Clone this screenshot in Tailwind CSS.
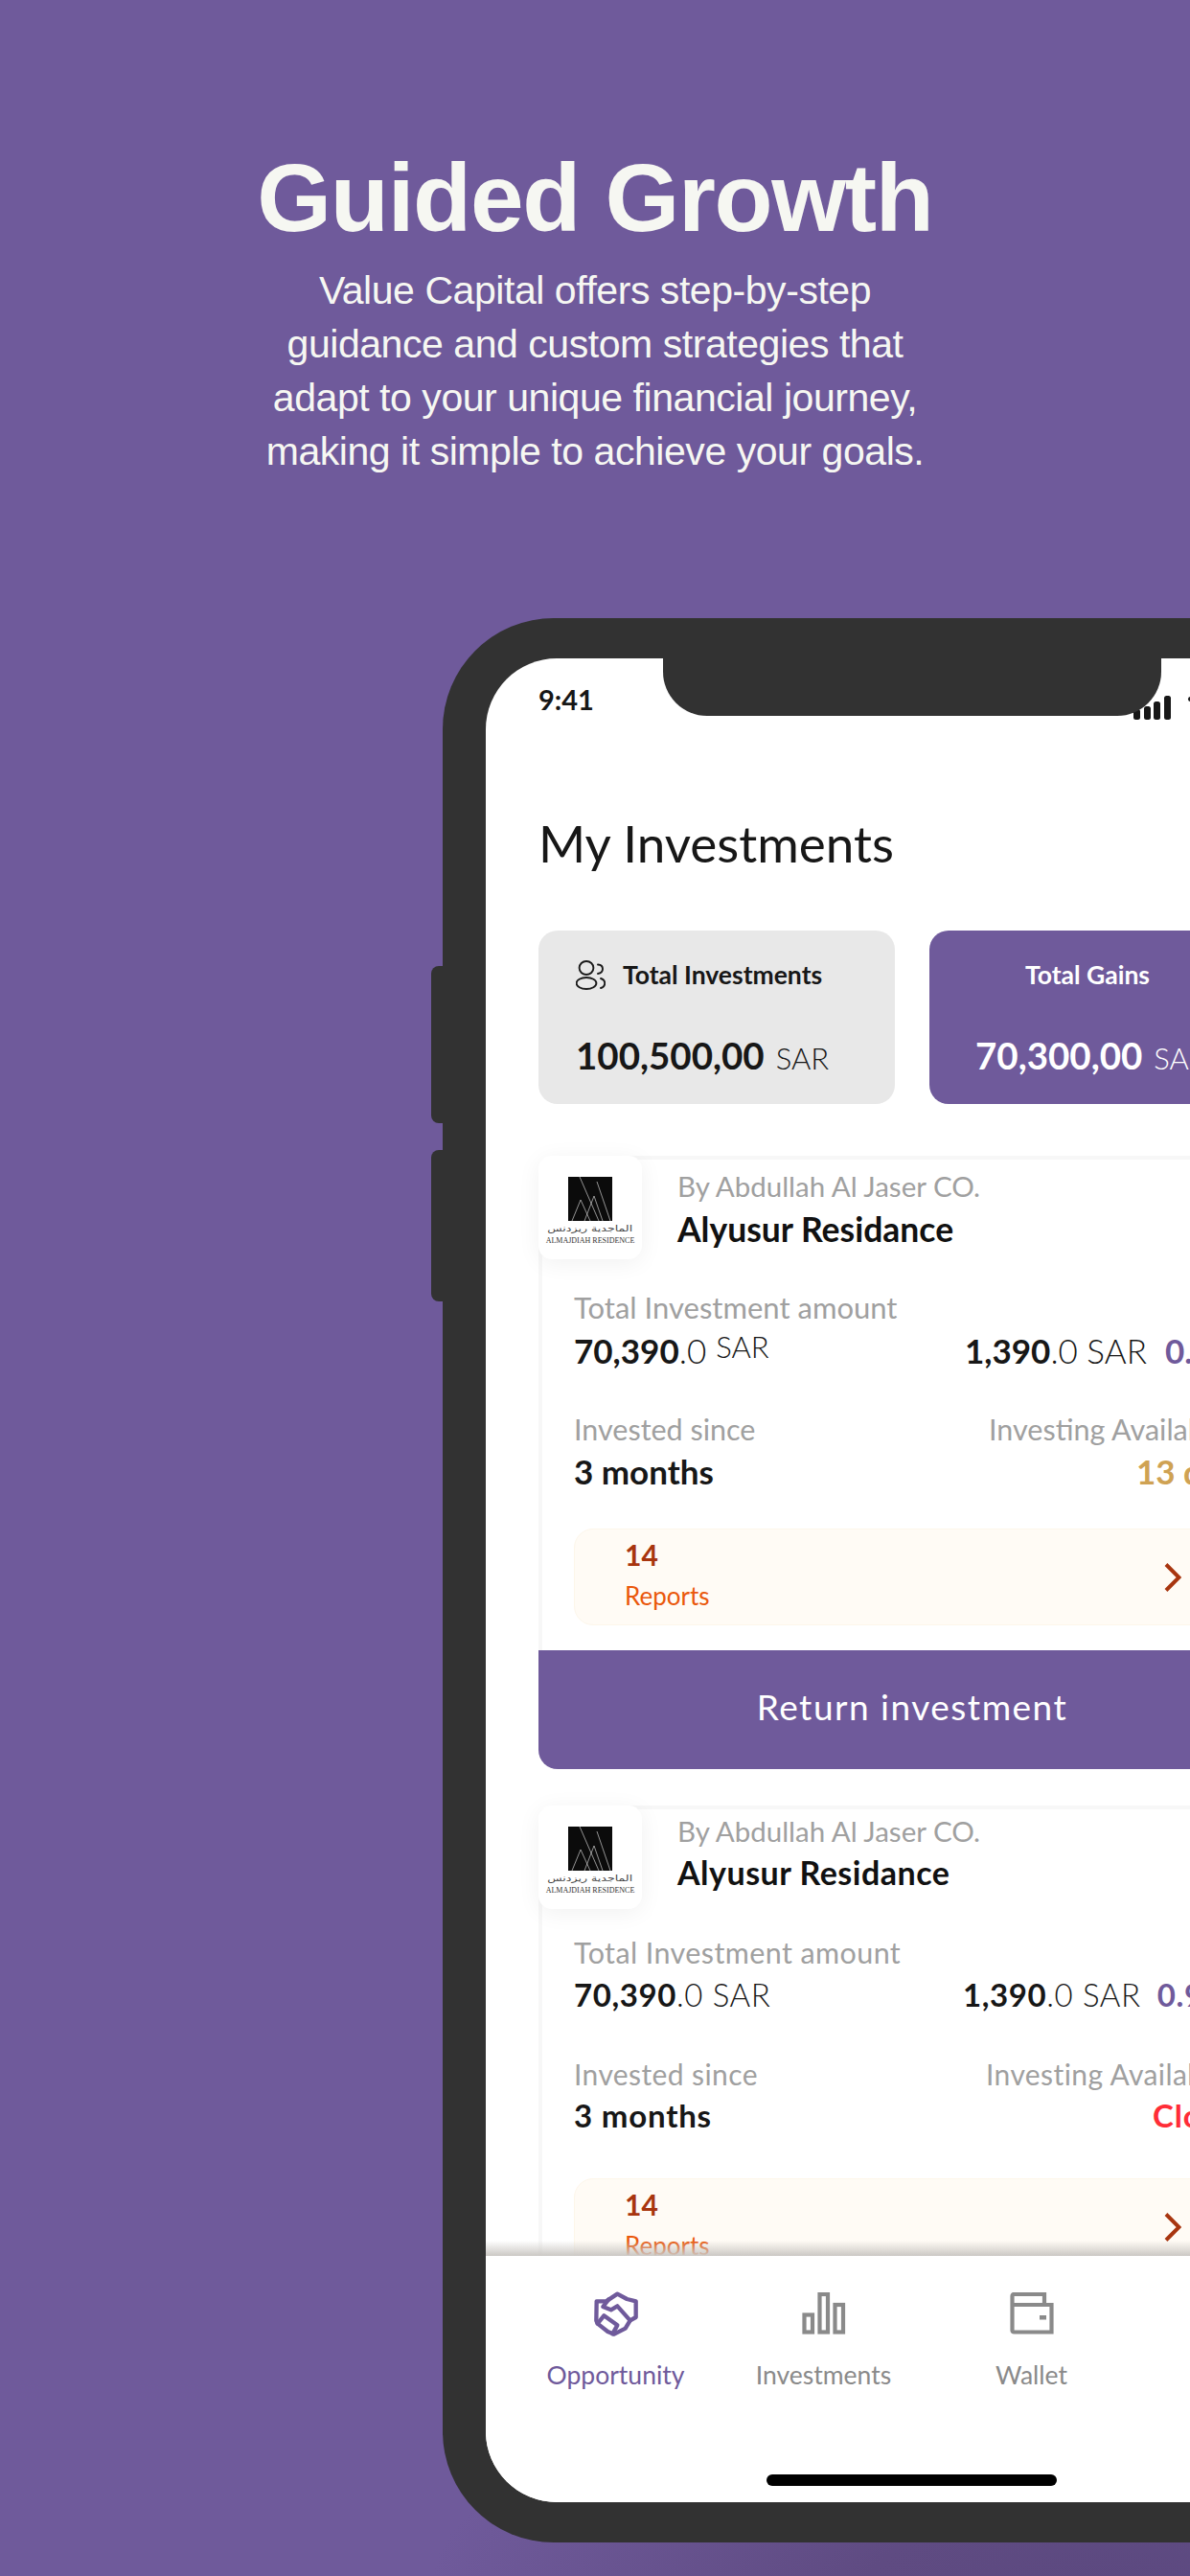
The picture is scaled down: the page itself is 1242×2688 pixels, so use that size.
<!DOCTYPE html>
<html lang="en">
<head>
    <meta charset="UTF-8">
    <meta name="viewport" content="width=device-width, initial-scale=1.0">
    <title>Guided Growth</title>
    <script src="https://cdn.jsdelivr.net/npm/@tailwindcss/browser@4"></script>
</head>
<body class="bg-[#6f5a9b]">
<div class="w-[1242px] h-[2688px] overflow-hidden bg-[radial-gradient(ellipse_700px_240px_at_1150px_2700px,#5c4980_0%,#5f4b82_35%,#6f5a9b_100%)] font-['Lato',sans-serif]">

    <!-- headline -->
    <div class="pt-[156px] text-center text-[#f6f7f2] font-['Liberation_Sans',sans-serif]">
        <h1 class="text-[100px] leading-[100px] font-bold tracking-[-1.3px]">Guided Growth</h1>
        <p class="mt-[19px] text-[41px] leading-[56px] tracking-[-0.45px]">Value Capital offers step-by-step<br>guidance and custom strategies that<br>adapt to your unique financial journey,<br>making it simple to achieve your goals.</p>
    </div>

    <!-- phone -->
    <div class="relative mt-[146px] ml-[462px] w-[1000px] h-[2008px] rounded-[116px] bg-[#323232] pt-[42px] pl-[45px] pr-[45px]">
        <div class="absolute -left-[12px] top-[363px] w-[14px] h-[164px] rounded-l-[8px] bg-[#323232]"></div>
        <div class="absolute -left-[12px] top-[555px] w-[14px] h-[158px] rounded-l-[8px] bg-[#323232]"></div>

        <div class="relative h-[1924px] rounded-[74px] bg-white overflow-hidden flex flex-col">
            <div class="absolute z-20 left-[185px] top-0 w-[520px] h-[60px] rounded-b-[46px] bg-[#323232]"></div>

            <div class="h-[1667px] shrink-0 overflow-hidden">
                <!-- status bar -->
                <div class="flex h-[163px] pl-[55px]">
                    <div class="w-[621px] mt-[28px] h-[30px] text-[29px] leading-[30px] font-bold text-[#171717]">9:41</div>
                    <div class="flex items-end gap-[3.7px] h-[25px] mt-[39px]">
                        <span class="block w-[7px] h-[11px] rounded-[2.5px] bg-[#171717]"></span>
                        <span class="block w-[7px] h-[14px] rounded-[2.5px] bg-[#171717]"></span>
                        <span class="block w-[7px] h-[19px] rounded-[2.5px] bg-[#171717]"></span>
                        <span class="block w-[7px] h-[25px] rounded-[2.5px] bg-[#171717]"></span>
                    </div>
                    <div class="ml-[18px] mt-[40px] w-[6px] h-[5px] rounded-full bg-[#171717]"></div>
                </div>

                <div class="px-[55px] w-[890px]">
                    <h2 class="h-[60px] text-[53px] leading-[60px] font-normal text-[#171717]">My Investments</h2>

                    <!-- totals -->
                    <div class="mt-[61px] flex gap-[36px]">
                        <div class="w-[372px] h-[181px] rounded-[20px] bg-[#e8e8e8] pl-[39px]">
                            <div class="flex items-center h-[30px] mt-[31px]">
                                <svg class="w-[31px] h-[31px] shrink-0" viewBox="0 0 31 31" fill="none" stroke="#1b1b1b" stroke-width="1.9" stroke-linecap="round">
                                    <ellipse cx="11" cy="8" rx="7.4" ry="7"/>
                                    <ellipse cx="11" cy="24" rx="10.4" ry="6"/>
                                    <path d="M23 4.5c3.5.3 5 2 5 4.5s-1.500 4.500-5 5"/>
                                    <path d="M26 19c3 1 4.200 3 4.200 5s-1.200 4-4.200 5"/>
                                </svg>
                                <span class="ml-[18px] text-[26.5px] leading-[30px] font-bold text-[#171717]">Total Investments</span>
                            </div>
                            <div class="mt-[47px] flex items-baseline h-[44px] leading-[44px] text-[#171717] whitespace-nowrap">
                                <span class="text-[38.5px] font-bold">100,500,00</span>
                                <span class="ml-[12px] text-[31px] font-light">SAR</span>
                            </div>
                        </div>
                        <div class="w-[372px] h-[181px] rounded-[20px] bg-[#6f5a9b] text-white pl-[48px]">
                            <div class="h-[30px] mt-[31px] pl-[52px] text-[26.5px] leading-[30px] font-bold">Total Gains</div>
                            <div class="mt-[47px] flex items-baseline h-[44px] leading-[44px] whitespace-nowrap">
                                <span class="text-[38.5px] font-bold">70,300,00</span>
                                <span class="ml-[12px] text-[31px] font-light">SAR</span>
                            </div>
                        </div>
                    </div>

                    <!-- first investment -->
                    <div class="mt-[54px] w-[780px] border-t-[4px] border-l-[4px] border-[#f7f7f7] rounded-[20px]">
                        <div class="flex -mt-[4px] -ml-[4px] h-[108px]">
                            <div class="w-[108px] h-[108px] rounded-[14px] bg-white shadow-[0_4px_24px_rgba(0,0,0,0.06)] flex flex-col items-center pt-[22px]">
                                <svg class="w-[46px] h-[46px]" viewBox="0 0 46 46">
                                    <rect width="46" height="46" fill="#0b0b0b"/>
                                    <path d="M12 0 L32 46 M4 46 L13 24 L23 46 M17 46 L27 20 L36 46 M30 5 L44 46" fill="none" stroke="#d0d0d0" stroke-width=".7"/>
                                </svg>
                                <div class="mt-[4px] h-[9px] text-[9px] leading-[9px] text-[#444] scale-x-[1.4] font-['DejaVu_Sans',sans-serif]" dir="rtl">الماجدية ريزدنس</div>
                                <div class="mt-[3px] text-[8px] leading-[10px] text-[#333] whitespace-nowrap font-['Liberation_Serif',serif]">ALMAJDIAH RESIDENCE</div>
                            </div>
                            <div class="ml-[37px] pt-[12px]">
                                <div class="text-[29.5px] leading-[40px] font-normal text-[#a0a0a0]">By Abdullah Al Jaser CO.</div>
                                <div class="mt-[3px] text-[35.5px] leading-[44px] font-bold text-[#111]">Alyusur Residance</div>
                            </div>
                        </div>
                        <div class="pl-[33px]">
                            <div class="mt-[32px] flex">
                                <div class="text-[31px] leading-[36px] font-normal text-[#a0a0a0] whitespace-nowrap">Total Investment amount</div>
                            </div>
                            <div class="mt-[7px] flex h-[40px] text-[35px] leading-[40px] text-[#171717] whitespace-nowrap">
                                <div class="w-[408px]"><b>70,390</b><span class="font-light">.0</span> <span class="relative -top-[6px] ml-[1px] text-[31px] font-light">SAR</span></div>
                                <div><b>1,390</b><span class="font-light">.0 SAR</span> <b class="ml-[10px] text-[#6f5a9b]">0.9%</b></div>
                            </div>
                            <div class="mt-[44px] flex h-[36px] text-[30.5px] leading-[36px] font-normal text-[#a0a0a0] whitespace-nowrap">
                                <div class="w-[433px]">Invested since</div>
                                <div>Investing Available</div>
                            </div>
                            <div class="mt-[6px] flex h-[40px] text-[35px] leading-[40px] font-bold whitespace-nowrap">
                                <div class="w-[587px] text-[#171717]">3 months</div>
                                <div class="text-[#cfa253]">13 days</div>
                            </div>
                            <div class="mt-[40px] h-[101px] w-[735px] rounded-[20px] border border-[#fdf6ea] bg-[#fffbf5] flex items-center pl-[52px] pr-[100px]">
                                <div class="flex-1 pb-[6px]">
                                    <div class="text-[30px] leading-[34px] font-bold text-[#a8350f]">14</div>
                                    <div class="mt-[10px] text-[26px] leading-[32px] text-[#ea580c]">Reports</div>
                                </div>
                                <svg class="w-[18px] h-[30px]" viewBox="0 0 18 30" fill="none" stroke="#a8350f" stroke-width="4"><path d="M2 1.5 L15.500 15 L2 28.500"/></svg>
                            </div>
                        </div>
                        <div class="-ml-[4px] mt-[26px] h-[124px] pb-[7px] rounded-b-[20px] bg-[#6f5a9b] flex items-center justify-center text-[37px] tracking-[1.5px] text-white">Return investment</div>
                    </div>

                    <!-- second investment -->
                    <div class="mt-[38px] w-[780px] border-t-[4px] border-l-[4px] border-[#f7f7f7] rounded-[20px]">
                        <div class="flex -mt-[4px] -ml-[4px] h-[108px]">
                            <div class="w-[108px] h-[108px] rounded-[14px] bg-white shadow-[0_4px_24px_rgba(0,0,0,0.06)] flex flex-col items-center pt-[22px]">
                                <svg class="w-[46px] h-[46px]" viewBox="0 0 46 46">
                                    <rect width="46" height="46" fill="#0b0b0b"/>
                                    <path d="M12 0 L32 46 M4 46 L13 24 L23 46 M17 46 L27 20 L36 46 M30 5 L44 46" fill="none" stroke="#d0d0d0" stroke-width=".7"/>
                                </svg>
                                <div class="mt-[4px] h-[9px] text-[9px] leading-[9px] text-[#444] scale-x-[1.4] font-['DejaVu_Sans',sans-serif]" dir="rtl">الماجدية ريزدنس</div>
                                <div class="mt-[3px] text-[8px] leading-[10px] text-[#333] whitespace-nowrap font-['Liberation_Serif',serif]">ALMAJDIAH RESIDENCE</div>
                            </div>
                            <div class="ml-[37px] pt-[7px]">
                                <div class="text-[29.5px] leading-[40px] font-normal text-[#a0a0a0]">By Abdullah Al Jaser CO.</div>
                                <div class="mt-[1px] text-[34px] leading-[44px] tracking-[0.5px] font-bold text-[#111]">Alyusur Residance</div>
                            </div>
                        </div>
                        <div class="pl-[33px]">
                            <div class="mt-[27px] text-[30.5px] leading-[36px] tracking-[0.4px] font-normal text-[#a0a0a0] whitespace-nowrap">Total Investment amount</div>
                            <div class="mt-[6px] flex h-[40px] text-[33px] leading-[40px] tracking-[0.6px] text-[#171717] whitespace-nowrap">
                                <div class="w-[406px]"><b>70,390</b><span class="font-light">.0 SAR</span></div>
                                <div><b>1,390</b><span class="font-light">.0 SAR</span> <b class="ml-[8px] text-[#6f5a9b]">0.9%</b></div>
                            </div>
                            <div class="mt-[45px] flex h-[36px] text-[30px] leading-[36px] tracking-[0.4px] font-normal text-[#a0a0a0] whitespace-nowrap">
                                <div class="w-[430px]">Invested since</div>
                                <div>Investing Available</div>
                            </div>
                            <div class="mt-[5px] flex h-[40px] text-[33px] leading-[40px] tracking-[0.8px] font-bold whitespace-nowrap">
                                <div class="w-[604px] text-[#171717]">3 months</div>
                                <div class="text-[#ff2d37]">Closed</div>
                            </div>
                            <div class="mt-[46px] h-[101px] w-[735px] rounded-[20px] border border-[#fdf6ea] bg-[#fffbf5] flex items-center pl-[52px] pr-[100px]">
                                <div class="flex-1 pb-[6px]">
                                    <div class="text-[30px] leading-[34px] font-bold text-[#a8350f]">14</div>
                                    <div class="mt-[10px] text-[26px] leading-[32px] text-[#ea580c]">Reports</div>
                                </div>
                                <svg class="w-[18px] h-[30px]" viewBox="0 0 18 30" fill="none" stroke="#a8350f" stroke-width="4"><path d="M2 1.5 L15.500 15 L2 28.500"/></svg>
                            </div>
                        </div>
                    </div>
                </div>
            </div>

            <!-- bottom nav -->
            <div class="relative h-[257px] shrink-0 bg-white pt-[38px]">
                <div class="absolute left-0 right-0 -top-[16px] h-[16px] bg-gradient-to-b from-transparent to-[#cbc8c4]"></div>
                <div class="flex pl-[27px]">
                    <div class="w-[217px] flex flex-col items-center text-[#6f5a9b]">
                        <svg class="w-[64px] h-[64px] -my-[9px]" viewBox="0 0 192 192" fill="none" stroke="#6f5a9b" stroke-width="13" stroke-linejoin="round" stroke-linecap="round">
                            <path d="M35 55 H65 L100 32 L130 48 L158 55 V105 L140 115 L125 140 L90 158 L70 150 L38 125 L34 115 Z"/>
                            <path d="M38 125 L58 100 L100 130 L85 157"/>
                            <path d="M140 115 L100 70 L80 82 L55 72 L72 50"/>
                        </svg>
                        <div class="mt-[25px] text-[26.5px] leading-[30px]">Opportunity</div>
                    </div>
                    <div class="w-[217px] flex flex-col items-center text-[#8a8a8a]">
                        <svg class="w-[46px] h-[46px]" viewBox="0 0 46 46" fill="none" stroke="#8a8a8a" stroke-width="4.200">
                            <rect x="2.500" y="23.500" width="8.500" height="18"/>
                            <rect x="18.500" y="2" width="8.500" height="39.500"/>
                            <rect x="34.500" y="13" width="8.500" height="28.500"/>
                        </svg>
                        <div class="mt-[25px] text-[26.5px] leading-[30px]">Investments</div>
                    </div>
                    <div class="w-[217px] flex flex-col items-center text-[#8a8a8a]">
                        <svg class="w-[46px] h-[46px]" viewBox="0 0 46 46" fill="none" stroke="#8a8a8a" stroke-width="4.200">
                            <path d="M2.500 13 V4 Q2.500 2 4.500 2 H36 V13 H43.500 V41.500 H4.500 Q2.500 41.500 2.500 39.500 Z M2.500 13 H36"/>
                            <rect x="31" y="24" width="7" height="4.500" fill="#8a8a8a" stroke="none"/>
                        </svg>
                        <div class="mt-[25px] text-[26.5px] leading-[30px]">Wallet</div>
                    </div>
                </div>
                <div class="mt-[89px] ml-[293px] w-[303px] h-[12px] rounded-full bg-black"></div>
            </div>
        </div>
    </div>
</div>
</body>
</html>
